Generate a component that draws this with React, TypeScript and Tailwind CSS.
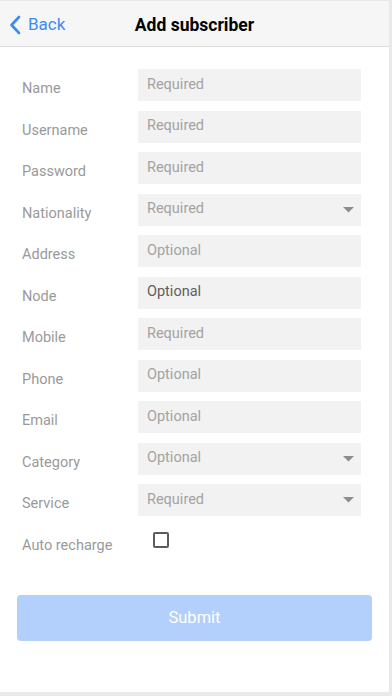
import { useState } from "react";

type Field = {
  label: string;
  placeholder: string;
  select?: boolean;
  value?: string;
};

const fields: Field[] = [
  { label: "Name", placeholder: "Required" },
  { label: "Username", placeholder: "Required" },
  { label: "Password", placeholder: "Required" },
  { label: "Nationality", placeholder: "Required", select: true },
  { label: "Address", placeholder: "Optional" },
  { label: "Node", placeholder: "Optional", value: "Optional" },
  { label: "Mobile", placeholder: "Required" },
  { label: "Phone", placeholder: "Optional" },
  { label: "Email", placeholder: "Optional" },
  { label: "Category", placeholder: "Optional", select: true },
  { label: "Service", placeholder: "Required", select: true },
];

export default function App() {
  const [autoRecharge, setAutoRecharge] = useState(false);

  return (
    <div
      className="w-[392px] h-[696px] bg-white flex flex-col border-t border-r-[3px] border-b-[4px] border-[#e9e9e9] overflow-hidden"
      style={{ fontFamily: "Roboto, 'Noto Sans', sans-serif" }}
    >
      {/* header */}
      <div className="h-[46px] shrink-0 bg-[#f6f6f6] border-b border-[#dcdcdc] flex items-center relative">
        <button className="flex items-center gap-[7px] pl-[9px] text-[#3d8bf2] text-[17px] pt-[3px]">
          <svg width="12" height="20" viewBox="0 0 12 20" fill="none">
            <polyline
              points="10,2 2.5,10 10,18"
              stroke="#3d8bf2"
              strokeWidth="2.6"
              strokeLinecap="round"
              strokeLinejoin="round"
            />
          </svg>
          Back
        </button>
        <div className="absolute left-0 right-0 text-center text-[17.5px] font-bold text-black pointer-events-none pt-[3px]">
          Add subscriber
        </div>
      </div>

      {/* form */}
      <div className="flex flex-col gap-[9.5px] pt-[22px] pl-[22px] pr-[28px]">
        {fields.map((f) => (
          <div key={f.label} className="flex items-center h-[32px]">
            <span className="w-[116px] shrink-0 text-[14.5px] text-[#9a9a9a] mt-[8px]">
              {f.label}
            </span>
            <div className="flex-1 h-[32px] bg-[#f2f2f2] flex items-center pl-[9px] pr-[6px]">
              <span
                className={
                  "flex-1 text-[14.5px] -mt-[1px] " +
                  (f.value ? "text-[#5e5e5e]" : "text-[#a3a3a3]")
                }
              >
                {f.value ?? f.placeholder}
              </span>
              {f.select && (
                <svg width="11" height="6" viewBox="0 0 11 6" className="mr-[1px]">
                  <polygon points="0,0 11,0 5.5,5.5" fill="#8d8d8d" />
                </svg>
              )}
            </div>
          </div>
        ))}
        <div className="flex items-center h-[32px]">
          <span className="w-[131px] shrink-0 text-[14.5px] text-[#9a9a9a] mt-[8px]">
            Auto recharge
          </span>
          <button
            onClick={() => setAutoRecharge(!autoRecharge)}
            className="w-[16px] h-[16px] border-2 border-[#5c5c5c] rounded-[2px] -mt-[3px]"
          />
        </div>
      </div>

      <div className="px-[17px] pt-[37px]">
        <button className="w-full h-[46px] rounded-[4px] bg-[#b3cffb] text-white text-[16.5px] pt-[2px]">
          Submit
        </button>
      </div>
    </div>
  );
}
